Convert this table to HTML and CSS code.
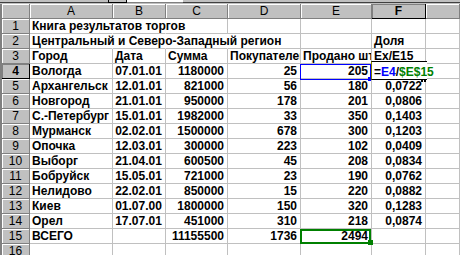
FILE: index.html
```html
<!DOCTYPE html>
<html>
<head>
<meta charset="utf-8">
<link rel="stylesheet" href="styles.css">
</head>
<body>
<div class="topbar"><span class="tb-btn"></span><span class="tb-field"></span></div>
<div class="sheet">
  <div class="row">
    <div class="hd"></div><div class="hd">A</div><div class="hd">B</div><div class="hd">C</div><div class="hd">D</div><div class="hd">E</div><div class="hd sel">F</div><div class="hd"></div>
  </div>
  <div class="row">
    <div class="hd">1</div><div class="c ov">Книга результатов торгов</div><div class="c nb"></div><div class="c"></div><div class="c"></div><div class="c"></div><div class="c"></div><div class="c"></div>
  </div>
  <div class="row">
    <div class="hd">2</div><div class="c ov">Центральный и Северо-Западный регион</div><div class="c nb"></div><div class="c nb"></div><div class="c"></div><div class="c"></div><div class="c">Доля</div><div class="c"></div>
  </div>
  <div class="row">
    <div class="hd">3</div><div class="c">Город</div><div class="c">Дата</div><div class="c">Сумма</div><div class="c">Покупателей</div><div class="c">Продано штук</div><div class="c">Ex/E15</div><div class="c"></div>
  </div>
  <div class="row">
    <div class="hd sel">4</div><div class="c">Вологда</div><div class="c m">07.01.01</div><div class="c r">1180000</div><div class="c r">25</div><div class="c r ref-blue">205</div><div class="c edit-cell"><div class="editor">=<span class="blue">E4</span>/<span class="green">$E$15</span></div></div><div class="c"></div>
  </div>
  <div class="row">
    <div class="hd">5</div><div class="c">Архангельск</div><div class="c m">12.01.01</div><div class="c r">821000</div><div class="c r">56</div><div class="c r">180</div><div class="c r">0,0722</div><div class="c"></div>
  </div>
  <div class="row">
    <div class="hd">6</div><div class="c">Новгород</div><div class="c m">21.01.01</div><div class="c r">950000</div><div class="c r">178</div><div class="c r">201</div><div class="c r">0,0806</div><div class="c"></div>
  </div>
  <div class="row">
    <div class="hd">7</div><div class="c">С.-Петербург</div><div class="c m">15.01.01</div><div class="c r">1982000</div><div class="c r">33</div><div class="c r">350</div><div class="c r">0,1403</div><div class="c"></div>
  </div>
  <div class="row">
    <div class="hd">8</div><div class="c">Мурманск</div><div class="c m">02.02.01</div><div class="c r">1500000</div><div class="c r">678</div><div class="c r">300</div><div class="c r">0,1203</div><div class="c"></div>
  </div>
  <div class="row">
    <div class="hd">9</div><div class="c">Опочка</div><div class="c m">12.03.01</div><div class="c r">300000</div><div class="c r">223</div><div class="c r">102</div><div class="c r">0,0409</div><div class="c"></div>
  </div>
  <div class="row">
    <div class="hd">10</div><div class="c">Выборг</div><div class="c m">21.04.01</div><div class="c r">600500</div><div class="c r">45</div><div class="c r">208</div><div class="c r">0,0834</div><div class="c"></div>
  </div>
  <div class="row">
    <div class="hd">11</div><div class="c">Бобруйск</div><div class="c m">15.05.01</div><div class="c r">721000</div><div class="c r">23</div><div class="c r">190</div><div class="c r">0,0762</div><div class="c"></div>
  </div>
  <div class="row">
    <div class="hd">12</div><div class="c">Нелидово</div><div class="c m">22.02.01</div><div class="c r">850000</div><div class="c r">15</div><div class="c r">220</div><div class="c r">0,0882</div><div class="c"></div>
  </div>
  <div class="row">
    <div class="hd">13</div><div class="c">Киев</div><div class="c m">01.07.00</div><div class="c r">1800000</div><div class="c r">150</div><div class="c r">320</div><div class="c r">0,1283</div><div class="c"></div>
  </div>
  <div class="row">
    <div class="hd">14</div><div class="c">Орел</div><div class="c m">17.07.01</div><div class="c r">451000</div><div class="c r">310</div><div class="c r">218</div><div class="c r">0,0874</div><div class="c"></div>
  </div>
  <div class="row">
    <div class="hd">15</div><div class="c">ВСЕГО</div><div class="c"></div><div class="c r">11155500</div><div class="c r">1736</div><div class="c r ref-green">2494</div><div class="c"></div><div class="c"></div>
  </div>
  <div class="row">
    <div class="hd">16</div><div class="c"></div><div class="c"></div><div class="c"></div><div class="c"></div><div class="c"></div><div class="c"></div><div class="c"></div>
  </div>
</div>
</body>
</html>
```
FILE: styles.css
```css
html, body {
  margin: 0;
  padding: 0;
}
body {
  width: 460px;
  height: 255px;
  overflow: hidden;
  background: #fff;
  font-family: "Liberation Sans", Arial, sans-serif;
  color: #000;
}
.topbar {
  display: flex;
  height: 4px;
  background: linear-gradient(#c0c0c0 0 2px, #404040 2px 3px, #c0c0c0 3px);
}
.tb-btn {
  margin-left: 108px;
  width: 19px;
  height: 3px;
  box-sizing: border-box;
  background: #c0c0c0;
  border: 1px solid #000;
  border-top: none;
}
.tb-field {
  width: 56px;
  height: 3px;
  box-sizing: border-box;
  background: #fff;
  border-bottom: 1px solid #808080;
}
.sheet {
  border-left: 2px solid #808080;
}
.row {
  display: grid;
  grid-template-columns: 28px 83px 53px 62px 73px 71px 54px 1fr;
  height: 15px;
}
.hd {
  box-sizing: border-box;
  background: #c0c0c0;
  border-right: 1px solid #808080;
  border-bottom: 1px solid #808080;
  box-shadow: inset 1px 1px 0 #fff;
  text-align: center;
  font-size: 12px;
  line-height: 14px;
  font-weight: normal;
  overflow: hidden;
}
.hd.sel {
  font-weight: bold;
  border-right-color: #000;
  border-bottom-color: #000;
  box-shadow: inset 1px 1px 0 #808080;
}
.c {
  box-sizing: border-box;
  border-right: 1px solid #c0c0c0;
  border-bottom: 1px solid #c0c0c0;
  padding: 0 3px 0 2px;
  font-size: 12px;
  font-weight: bold;
  line-height: 14px;
  white-space: nowrap;
  overflow: hidden;
}
.r { text-align: right; }
.m { text-align: center; }
.ov {
  overflow: visible;
  border-right-color: transparent;
}
.nb { border-right-color: transparent; }
.ref-blue, .ref-green, .edit-cell {
  position: relative;
  overflow: visible;
}
.ref-blue::before {
  content: "";
  position: absolute;
  left: -1px;
  top: 0;
  width: 71px;
  height: 16px;
  box-sizing: border-box;
  border: 1px solid #0000ff;
}
.ref-blue::after {
  content: "";
  position: absolute;
  left: 67px;
  top: 13px;
  width: 3px;
  height: 4px;
  background: #0000ff;
}
.ref-green::before {
  content: "";
  position: absolute;
  left: -1px;
  top: 0;
  width: 71px;
  height: 15px;
  box-sizing: border-box;
  border: 2px solid #008000;
}
.ref-green::after {
  content: "";
  position: absolute;
  left: 67px;
  top: 11px;
  width: 5px;
  height: 5px;
  background: #008000;
}
.editor {
  position: absolute;
  left: -1px;
  top: -3px;
  width: 56px;
  height: 19px;
  box-sizing: border-box;
  border-top: 1px solid #000;
  border-bottom: 1px solid #000;
  border-left: 1px solid #808000;
  background: #fff;
  padding: 3px 0 0 2px;
  line-height: 14px;
  white-space: nowrap;
}
.editor::after {
  content: "";
  position: absolute;
  right: 1px;
  bottom: -3px;
  width: 1px;
  height: 2px;
  border-left: 2px solid #000;
  border-right: 2px solid #000;
}
.blue { color: #0000ff; }
.green { color: #008000; }
```
